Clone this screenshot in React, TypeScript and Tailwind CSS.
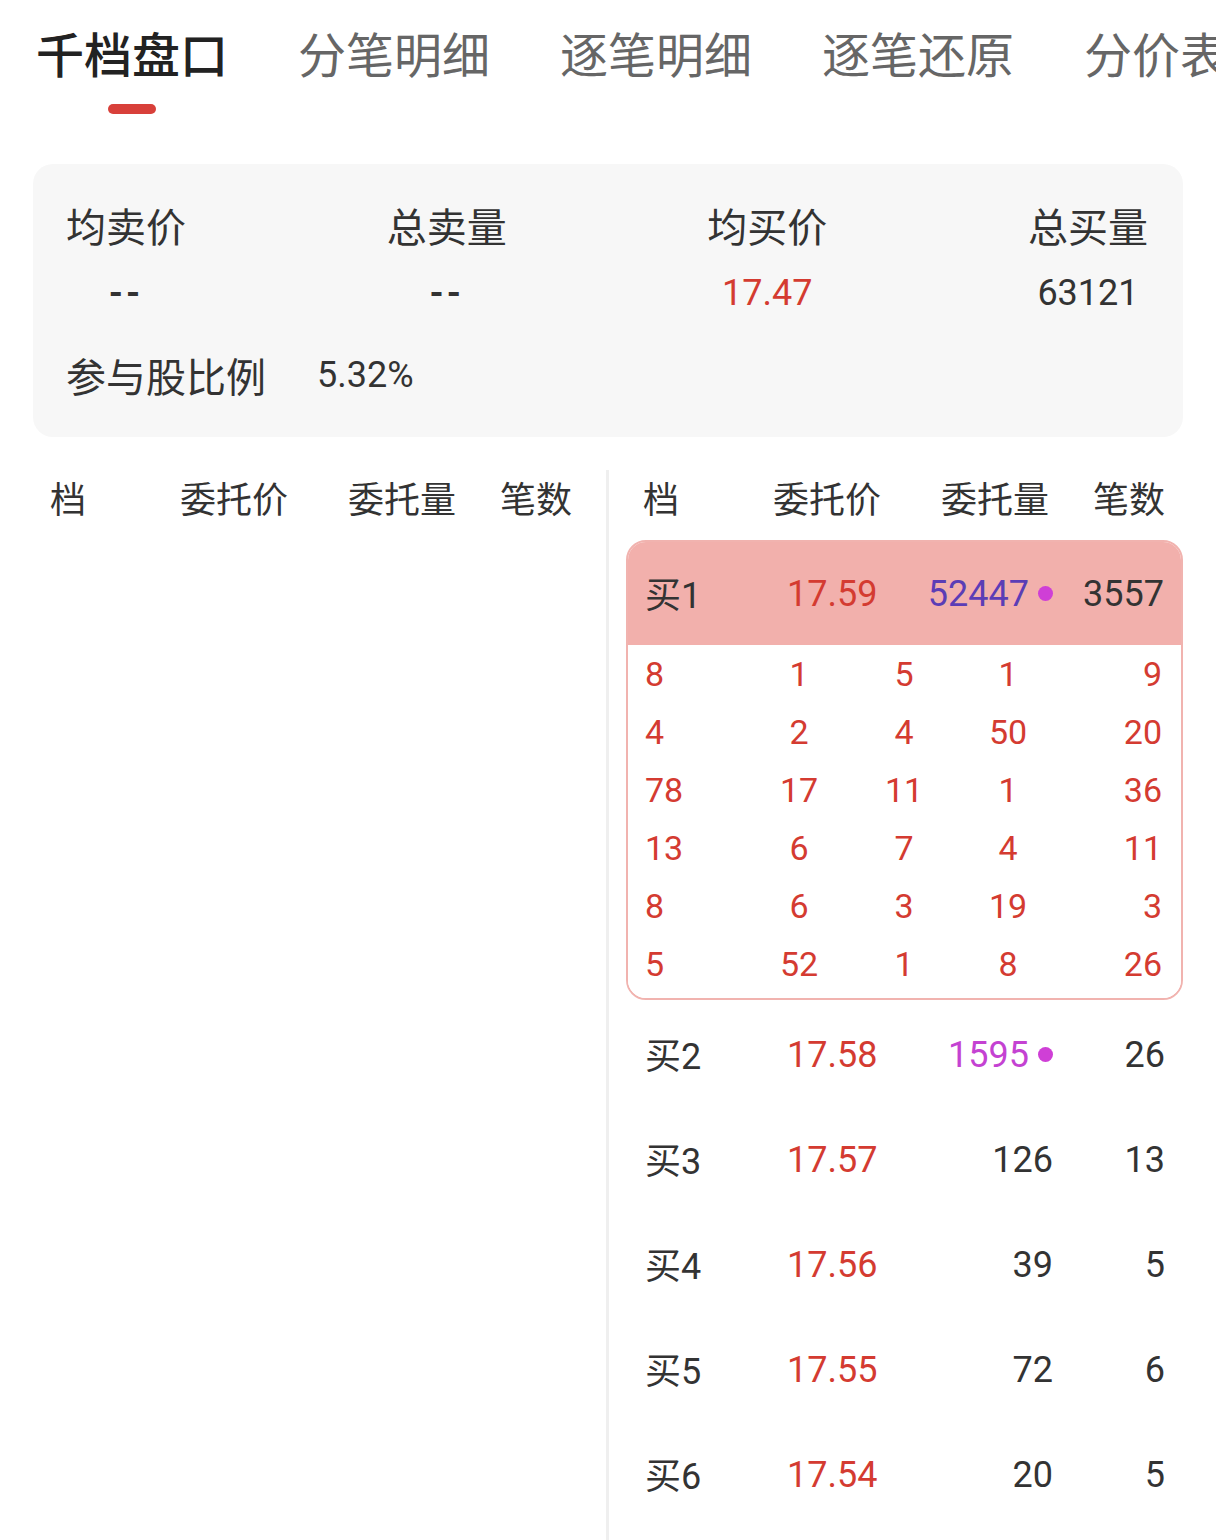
const tabs = ['千档盘口', '分笔明细', '逐笔明细', '逐笔还原', '分价表'];

const summary = [
  { label: '均卖价', value: '--', red: false },
  { label: '总卖量', value: '--', red: false },
  { label: '均买价', value: '17.47', red: true },
  { label: '总买量', value: '63121', red: false },
];

const headers = ['档', '委托价', '委托量', '笔数'];

// 买1 的逐笔委托明细
const details = [
  ['8', '1', '5', '1', '9'],
  ['4', '2', '4', '50', '20'],
  ['78', '17', '11', '1', '36'],
  ['13', '6', '7', '4', '11'],
  ['8', '6', '3', '19', '3'],
  ['5', '52', '1', '8', '26'],
];

const buys = [
  { level: '买2', price: '17.58', qty: '1595', count: '26', dot: true },
  { level: '买3', price: '17.57', qty: '126', count: '13', dot: false },
  { level: '买4', price: '17.56', qty: '39', count: '5', dot: false },
  { level: '买5', price: '17.55', qty: '72', count: '6', dot: false },
  { level: '买6', price: '17.54', qty: '20', count: '5', dot: false },
];

const cjk = "font-['Noto_Sans_CJK_SC',sans-serif]";
const num = "font-['Roboto','Noto_Sans_CJK_SC',sans-serif]";

function HeaderRow() {
  return (
    <div className={`grid grid-cols-[130px_168px_152px_72px] h-[54px] items-center text-[36px] text-[#333] ${cjk}`}>
      {headers.map((h, i) => (
        <div key={h} className={i === 3 ? 'text-right' : ''}>
          {h}
        </div>
      ))}
    </div>
  );
}

export default function App() {
  return (
    <div className="w-[1216px] h-[1540px] bg-white overflow-hidden flex flex-col">
      {/* Tabs */}
      <div className="pt-[20px] pl-[36px] flex gap-[70px] whitespace-nowrap">
        {tabs.map((t, i) => (
          <div key={t} className="flex flex-col items-center shrink-0">
            <div
              className={`h-[64px] leading-[64px] text-[48px] ${cjk} ${
                i === 0 ? 'text-[#222] font-medium' : 'text-[#666]'
              }`}
            >
              {t}
            </div>
            {i === 0 && <div className="mt-[20px] h-[10px] w-[48px] rounded-full bg-[#d8403a]" />}
            {i !== 0 && <div className="mt-[20px] h-[10px]" />}
          </div>
        ))}
      </div>

      {/* Summary card */}
      <div className="mx-[33px] mt-[50px] rounded-[20px] bg-[#f7f7f7] pl-[33px] pr-[35px] pt-[33px] pb-[34px]">
        <div className="flex justify-between">
          {summary.map((s) => (
            <div key={s.label} className="flex flex-col items-center">
              <div className={`text-[40px] leading-[56px] text-[#333] ${cjk}`}>{s.label}</div>
              <div
                className={`mt-[16px] text-[36px] leading-[48px] ${num} ${
                  s.red ? 'text-[#d43b31]' : 'text-[#333]'
                } ${s.value === '--' ? 'font-bold tracking-[3px]' : ''}`}
              >
                {s.value}
              </div>
            </div>
          ))}
        </div>
        <div className="mt-[30px] flex items-center h-[56px]">
          <span className={`text-[40px] text-[#333] ${cjk}`}>参与股比例</span>
          <span className={`ml-[51px] text-[36px] text-[#333] ${num}`}>5.32%</span>
        </div>
      </div>

      {/* Order book */}
      <div className="mt-[33px] flex flex-1">
        {/* 卖盘 */}
        <div className="w-[606px] pl-[50px]">
          <HeaderRow />
        </div>

        {/* 买盘 */}
        <div className="flex-1 border-l-[3px] border-[#efefef] pl-[17px] pr-[33px]">
          <div className="pl-[17px]">
            <HeaderRow />
          </div>

          <div className="mt-[16px] rounded-[20px] border-2 border-[#f1b3af] overflow-hidden">
            <div
              className={`h-[103px] bg-[#f2b0ac] pl-[17px] pr-[15px] grid grid-cols-[142px_140px_126px_111px] items-center text-[36px] ${num}`}
            >
              <div className={`text-[#333] ${cjk}`}>
                买<span className={num}>1</span>
              </div>
              <div className="text-[#d43b31]">17.59</div>
              <div className="flex items-center justify-end gap-[9px] text-[#5b3db6]">
                52447
                <span className="inline-block h-[15px] w-[15px] rounded-full bg-[#cf3fd6]" />
              </div>
              <div className="text-right text-[#333]">3557</div>
            </div>
            <div className="bg-white pl-[17px] pr-[17px] pb-[5px]">
              {details.map((row, ri) => (
                <div
                  key={ri}
                  className={`h-[58px] grid grid-cols-[104px_100px_110px_98px_105px] items-center text-[34px] text-[#d43b31] ${num}`}
                >
                  {row.map((c, ci) => (
                    <div
                      key={ci}
                      className={ci === 0 ? 'text-left' : ci === 4 ? 'text-right' : 'text-center'}
                    >
                      {c}
                    </div>
                  ))}
                </div>
              ))}
            </div>
          </div>

          {buys.map((b) => (
            <div
              key={b.level}
              className={`h-[105px] pt-[4px] pl-[19px] pr-[18px] grid grid-cols-[142px_140px_126px_112px] items-center text-[36px] ${num}`}
            >
              <div className={`text-[#333] ${cjk}`}>
                买<span className={num}>{b.level.slice(1)}</span>
              </div>
              <div className="text-[#d43b31]">{b.price}</div>
              {b.dot ? (
                <div className="flex items-center justify-end gap-[9px] text-[#c442d2]">
                  {b.qty}
                  <span className="inline-block h-[15px] w-[15px] rounded-full bg-[#cf3fd6]" />
                </div>
              ) : (
                <div className="text-right text-[#333]">{b.qty}</div>
              )}
              <div className="text-right text-[#333]">{b.count}</div>
            </div>
          ))}
        </div>
      </div>
    </div>
  );
}
